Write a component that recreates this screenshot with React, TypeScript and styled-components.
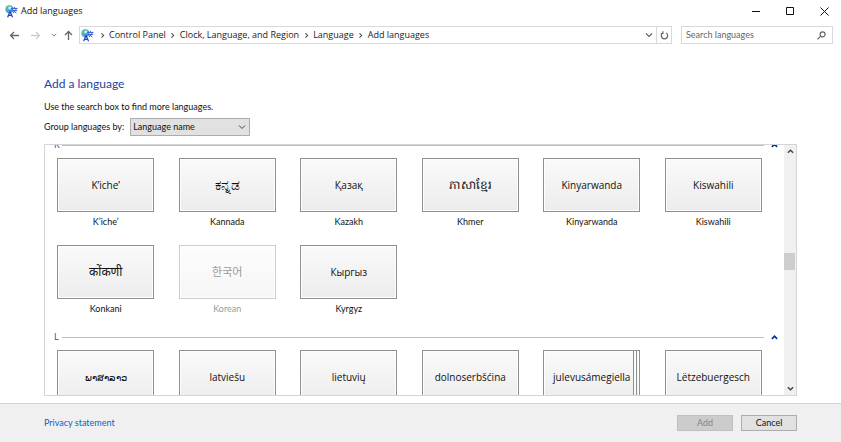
import React from 'react';
import styled, { createGlobalStyle } from 'styled-components';

const GlobalStyle = createGlobalStyle`
  *, *::before, *::after { box-sizing: border-box; }
  body { margin: 0; background: #fff; color: #111; font: 9px/14px Lato, "Noto Sans", sans-serif; }
  button, input, select { font: inherit; color: inherit; margin: 0; }
  button { padding: 0; border: 0; background: none; }
  svg { display: block; flex: none; }
`;

const Window = styled.div`
  display: flex;
  flex-direction: column;
  height: 100vh;
`;

const TitleBar = styled.header`
  display: flex;
  align-items: center;
  height: 22px;
  padding-left: 5px;
  gap: 3px;
  font: 9px/14px "Open Sans", sans-serif;
`;

const WindowTitle = styled.span`
  flex: 1;
`;

const WindowButtons = styled.div`
  display: flex;
`;

const WindowButton = styled.button`
  display: grid;
  place-items: center;
  width: 34px;
  height: 22px;
`;

const NavBar = styled.nav`
  display: flex;
  align-items: center;
  height: 26px;
  padding: 0 8px;
  font: 9px/14px "Open Sans", sans-serif;
`;

const NavButton = styled.button<{ $width: number }>`
  display: grid;
  place-items: center;
  width: ${(p) => p.$width}px;
  height: 18px;
`;

const AddressBar = styled.div`
  display: flex;
  align-items: center;
  flex: 1;
  height: 18px;
  margin-right: 9px;
  padding-left: 1px;
  border: 1px solid #d9d9d9;
`;

const Crumbs = styled.ol`
  display: flex;
  flex: 1;
  margin: 0;
  padding: 0 1px;
  list-style: none;
`;

const Crumb = styled.li`
  display: flex;
  align-items: center;
`;

const CrumbArrow = styled.span`
  display: grid;
  place-items: center;
  width: 14px;
`;

const CrumbLink = styled.a`
  color: #222;
  text-decoration: none;
`;

const AddressButton = styled.button<{ $divided?: boolean }>`
  display: grid;
  place-items: center;
  width: 15px;
  height: 16px;
  border-left: ${(p) => (p.$divided ? '1px solid #d9d9d9' : '0')};
`;

const SearchBox = styled.label`
  display: flex;
  align-items: center;
  width: 152px;
  height: 18px;
  padding: 0 6px 0 4px;
  border: 1px solid #d9d9d9;
`;

const SearchInput = styled.input`
  flex: 1;
  min-width: 0;
  padding: 0;
  border: 0;
  outline: 0;
  background: none;
  font-family: Lato, sans-serif;
  &::placeholder { color: #666; opacity: 1; }
`;

const Main = styled.main`
  display: flex;
  flex-direction: column;
  flex: 1;
  min-height: 0;
  padding: 26px 44px 7px;
`;

const Heading = styled.h1`
  margin: 0;
  color: #1943a5;
  font-size: 12px;
  font-weight: 400;
  line-height: 20px;
`;

const Hint = styled.p`
  margin: 6px 0 4px;
`;

const GroupRow = styled.div`
  display: flex;
  align-items: center;
  gap: 6px;
`;

const SelectFrame = styled.div`
  display: grid;
  align-items: center;
  width: 120px;
  height: 18px;
  border: 1px solid #adadad;
  background: #e1e1e1;
  & > * { grid-area: 1 / 1; }
  & > svg { justify-self: end; margin-right: 3px; pointer-events: none; }
`;

const GroupSelect = styled.select`
  appearance: none;
  width: 100%;
  height: 16px;
  padding: 0 2px;
  border: 0;
  background: none;
`;

const ListFrame = styled.section`
  display: flex;
  flex: 1;
  min-height: 0;
  margin-top: 8px;
  border: 1px solid #d5d5d5;
  overflow: hidden;
`;

const ListContent = styled.div`
  flex: 1;
  margin-top: -6px;
  padding-right: 10px;
`;

const GroupTitle = styled.h2`
  display: flex;
  align-items: center;
  height: 12px;
  margin: 0 0 7px;
  padding-left: 9px;
  color: #1943a5;
  font: 9px/12px "Open Sans", sans-serif;
`;

const GroupLetter = styled.span`
  width: 8px;
`;

const GroupLine = styled.span`
  flex: 1;
  height: 1px;
  background: #b3bfdc;
`;

const CollapseButton = styled.button`
  display: grid;
  place-items: center;
  width: 20px;
  height: 12px;
  margin-right: -10px;
`;

const TileGrid = styled.div`
  display: grid;
  grid-template-columns: repeat(6, 1fr);
  row-gap: 15px;
  margin-bottom: 14px;
`;

const TileCell = styled.button<{ $faded?: boolean }>`
  display: flex;
  flex-direction: column;
  align-items: center;
  gap: 2px;
  color: #111;
  opacity: ${(p) => (p.$faded ? 0.45 : 1)};
`;

const TileFace = styled.span<{ $stacked?: boolean; $size?: number }>`
  position: relative;
  display: grid;
  place-items: center;
  width: 97px;
  height: 54px;
  border: 1px solid #8f8f8f;
  box-shadow: inset 0 0 0 1px #fff;
  background: linear-gradient(#fafafa, #ececec);
  font: ${(p) => p.$size ?? 10}px/16px "Open Sans", "Noto Sans", "Noto Sans CJK KR", sans-serif;
  white-space: nowrap;
  &::after {
    content: ${(p) => (p.$stacked ? '""' : 'none')};
    position: absolute;
    inset: 0 2px 0 auto;
    width: 4px;
    border: solid #8f8f8f;
    border-width: 0 1px;
    background: #fafafa;
  }
`;

const TileLabel = styled.span`
  line-height: 16px;
`;

const Scrollbar = styled.div`
  display: flex;
  flex-direction: column;
  width: 12px;
  background: #f0f0f0;
`;

const ScrollButton = styled.button`
  display: grid;
  place-items: center;
  height: 13px;
`;

const ScrollTrack = styled.div`
  display: grid;
  grid-template-rows: 95fr 17px 112fr;
  flex: 1;
`;

const ScrollThumb = styled.div`
  grid-row: 2;
  margin-right: 1px;
  background: #cdcdcd;
`;

const Footer = styled.footer`
  display: flex;
  align-items: center;
  gap: 8px;
  height: 39px;
  padding: 0 44px;
  border-top: 1px solid #d4d4d4;
  background: #f0f0f0;
`;

const PrivacyLink = styled.a`
  margin-right: auto;
  color: #0066cc;
  text-decoration: none;
`;

const ActionButton = styled.button`
  width: 56px;
  height: 16px;
  border: 1px solid #adadad;
  background: #e1e1e1;
  line-height: 14px;
  &:disabled { border-color: #bfbfbf; background: #cccccc; color: #838383; }
`;

type ChevronProps = { dir: 'up' | 'down' | 'right'; size?: number; color?: string; weight?: number };

const chevronPaths = { up: 'M1 5.5 4 2.5 7 5.5', down: 'M1 2.5 4 5.5 7 2.5', right: 'M2.8 1.5 5.3 4 2.8 6.5' };

const Chevron = ({ dir, size = 8, color = '#444', weight = 1.2 }: ChevronProps) => (
  <svg width={size} height={size} viewBox="0 0 8 8" fill="none" stroke={color} strokeWidth={weight} aria-hidden="true">
    <path d={chevronPaths[dir]} />
  </svg>
);

const LanguageIcon = () => (
  <svg width="13" height="13" viewBox="0 0 13 13" fill="none" aria-hidden="true">
    <circle cx="4.4" cy="4.2" r="4" fill="#4aa6e0" />
    <path d="M.6 3.6C1.400 1.200 3.400 .3 4.800 .5 4.800 2 3.800 2.600 3.200 3.800 2.400 5 1.400 4.800 .6 3.600Z" fill="#62c878" />
    <path d="M3.600 2.200C4.600 1 6 1.400 6.400 2.600L5 4.600 3.400 4Z" fill="#d4f4fb" />
    <path d="M2.600 12.300 5 6.600 7.600 12.300M3.600 10.300h3" stroke="#2348c0" strokeWidth="1.300" />
    <path d="M6.200 3.400h6.300M9.400 2v1.400M6.600 5.600h5.600M11.400 3.800 8 8.200M8 5.400 11.300 8" stroke="#2d5cd2" strokeWidth="1" />
  </svg>
);

const Arrow = ({ d, color }: { d: string; color: string }) => (
  <svg width="11" height="11" viewBox="0 0 11 11" fill="none" stroke={color} strokeWidth="1.3" aria-hidden="true">
    <path d={d} />
  </svg>
);

const crumbs = ['Control Panel', 'Clock, Language, and Region', 'Language', 'Add languages'];

type Language = { native: string; name?: string; size?: number; installed?: boolean; variants?: boolean };

const groups: { letter: string; languages: Language[] }[] = [
  {
    letter: 'K',
    languages: [
      { native: 'K’iche’', name: 'K’iche’' },
      { native: 'ಕನ್ನಡ', name: 'Kannada', size: 14 },
      { native: 'Қазақ', name: 'Kazakh' },
      { native: 'ភាសាខ្មែរ', name: 'Khmer', size: 12 },
      { native: 'Kinyarwanda', name: 'Kinyarwanda' },
      { native: 'Kiswahili', name: 'Kiswahili' },
      { native: 'कोंकणी', name: 'Konkani', size: 12 },
      { native: '한국어', name: 'Korean', size: 11, installed: true },
      { native: 'Кыргыз', name: 'Kyrgyz' },
    ],
  },
  {
    letter: 'L',
    languages: [
      { native: 'ພາສາລາວ' },
      { native: 'latviešu' },
      { native: 'lietuvių' },
      { native: 'dolnoserbšćina' },
      { native: 'julevusámegiella', variants: true },
      { native: 'Lëtzebuergesch' },
    ],
  },
];

export default function App() {
  return (
    <Window>
      <GlobalStyle />
      <TitleBar>
        <LanguageIcon />
        <WindowTitle>Add languages</WindowTitle>
        <WindowButtons>
          <WindowButton aria-label="Minimize">
            <svg width="9" height="9" stroke="#111"><path d="M0 4.5h8" /></svg>
          </WindowButton>
          <WindowButton aria-label="Maximize">
            <svg width="9" height="9" fill="none" stroke="#111"><path d="M.5 .5h7v7h-7z" /></svg>
          </WindowButton>
          <WindowButton aria-label="Close">
            <svg width="9" height="9" fill="none" stroke="#111"><path d="M.5 .5l8 8M8.5 .5l-8 8" /></svg>
          </WindowButton>
        </WindowButtons>
      </TitleBar>
      <NavBar>
        <NavButton $width={12} aria-label="Back"><Arrow color="#666" d="M10 5.5H1.5M5 2 1.5 5.5 5 9" /></NavButton>
        <NavButton $width={31} aria-label="Forward"><Arrow color="#ccc" d="M1 5.5h8.5M6 2l3.5 3.5L6 9" /></NavButton>
        <NavButton $width={6} aria-label="Recent locations"><Chevron dir="down" size={6} color="#777" /></NavButton>
        <NavButton $width={22} aria-label="Up"><Arrow color="#666" d="M5.5 10V1.5M2 5l3.500-3.500L9 5" /></NavButton>
        <AddressBar>
          <LanguageIcon />
          <Crumbs>
            {crumbs.map((crumb) => (
              <Crumb key={crumb}>
                <CrumbArrow><Chevron dir="right" size={7} /></CrumbArrow>
                <CrumbLink href="#">{crumb}</CrumbLink>
              </Crumb>
            ))}
          </Crumbs>
          <AddressButton aria-label="Previous locations"><Chevron dir="down" color="#666" /></AddressButton>
          <AddressButton $divided aria-label="Refresh">
            <svg width="9" height="9" viewBox="0 0 9 9" fill="none" stroke="#666" strokeWidth="1.2">
              <path d="M6.300 2A3.200 3.200 0 1 1 2.700 2M2.900 .2v2.300H.8" />
            </svg>
          </AddressButton>
        </AddressBar>
        <SearchBox>
          <SearchInput type="search" aria-label="Search languages" placeholder="Search languages" />
          <svg width="9" height="9" viewBox="0 0 9 9" fill="none" stroke="#666" strokeWidth="1.2">
            <circle cx="5.6" cy="3.3" r="2.5" />
            <path d="M3.700 5.200.5 8.400" />
          </svg>
        </SearchBox>
      </NavBar>
      <Main>
        <Heading>Add a language</Heading>
        <Hint>Use the search box to find more languages.</Hint>
        <GroupRow>
          <label htmlFor="group-by">Group languages by:</label>
          <SelectFrame>
            <GroupSelect id="group-by">
              <option>Language name</option>
            </GroupSelect>
            <Chevron dir="down" weight={1} />
          </SelectFrame>
        </GroupRow>
        <ListFrame aria-label="Languages">
          <ListContent>
            {groups.map(({ letter, languages }) => (
              <React.Fragment key={letter}>
                <GroupTitle>
                  <GroupLetter>{letter}</GroupLetter>
                  <GroupLine />
                  <CollapseButton aria-label={`Collapse ${letter}`}>
                    <Chevron dir="up" size={7} color="#003399" weight={2} />
                  </CollapseButton>
                </GroupTitle>
                <TileGrid>
                  {languages.map(({ native, name, size, installed, variants }) => (
                    <TileCell key={native} disabled={installed} $faded={installed}>
                      <TileFace $stacked={variants} $size={size}>{native}</TileFace>
                      {name && <TileLabel>{name}</TileLabel>}
                    </TileCell>
                  ))}
                </TileGrid>
              </React.Fragment>
            ))}
          </ListContent>
          <Scrollbar>
            <ScrollButton aria-label="Scroll up"><Chevron dir="up" size={7} weight={1.6} /></ScrollButton>
            <ScrollTrack><ScrollThumb /></ScrollTrack>
            <ScrollButton aria-label="Scroll down"><Chevron dir="down" size={7} weight={1.6} /></ScrollButton>
          </Scrollbar>
        </ListFrame>
      </Main>
      <Footer>
        <PrivacyLink href="#">Privacy statement</PrivacyLink>
        <ActionButton disabled>Add</ActionButton>
        <ActionButton>Cancel</ActionButton>
      </Footer>
    </Window>
  );
}
